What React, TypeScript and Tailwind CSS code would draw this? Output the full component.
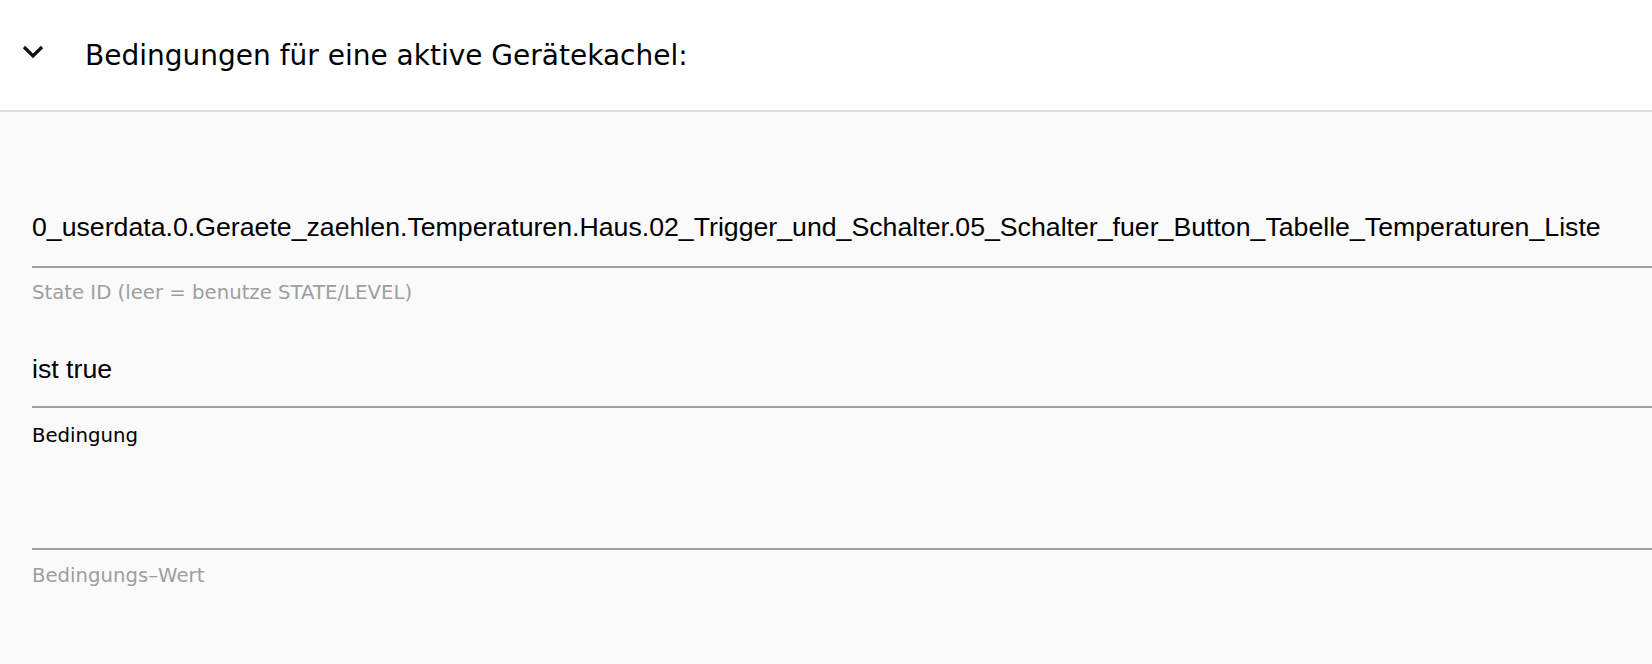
import React from "react";

const lucida = { fontFamily: '"DejaVu Sans", "Noto Sans", sans-serif' };

function Field({
  value,
  label,
  labelDark,
  topPad,
  inputH,
  labelGap,
}: {
  value: string;
  label: string;
  labelDark?: boolean;
  topPad: string;
  inputH: string;
  labelGap: string;
}) {
  return (
    <div className={`flex flex-col ${topPad}`}>
      <div
        className={`flex items-start ${inputH} border-b-2 border-[#a0a0a0] text-[26.7px] leading-[30px] text-black font-['Liberation_Sans',Arial,sans-serif]`}
      >
        <span className="whitespace-nowrap">{value}</span>
      </div>
      <div
        className={`${labelGap} text-[19.7px] leading-[24px] ${labelDark ? "text-black" : "text-[#9e9e9e]"}`}
        style={lucida}
      >
        {label}
      </div>
    </div>
  );
}

export default function App() {
  return (
    <div className="w-[1652px] h-[664px] overflow-hidden bg-[#fafafa]">
      <div className="h-[112px] bg-white border-b-2 border-[#dedede] flex items-center">
        <svg
          width="26"
          height="20"
          viewBox="0 0 26 20"
          className="ml-[20px] mt-[-6px]"
        >
          <polyline
            points="4,5 13,14 22,5"
            fill="none"
            stroke="#111"
            strokeWidth="3.2"
          />
        </svg>
        <div
          className="ml-[39px] mt-[1px] text-[28px] text-black"
          style={lucida}
        >
          Bedingungen für eine aktive Gerätekachel:
        </div>
      </div>
      <div className="pl-[32px]">
        <Field
          value="0_userdata.0.Geraete_zaehlen.Temperaturen.Haus.02_Trigger_und_Schalter.05_Schalter_fuer_Button_Tabelle_Temperaturen_Liste"
          label="State ID (leer = benutze STATE/LEVEL)"
          topPad="pt-[100px]"
          inputH="h-[56px]"
          labelGap="mt-[13px]"
        />
        <Field
          value="ist true"
          label="Bedingung"
          labelDark
          topPad="pt-[49px]"
          inputH="h-[54px]"
          labelGap="mt-[16px]"
        />
        <Field
          value=""
          label="Bedingungs–Wert"
          topPad="pt-[49px]"
          inputH="h-[53px]"
          labelGap="mt-[14px]"
        />
      </div>
    </div>
  );
}
